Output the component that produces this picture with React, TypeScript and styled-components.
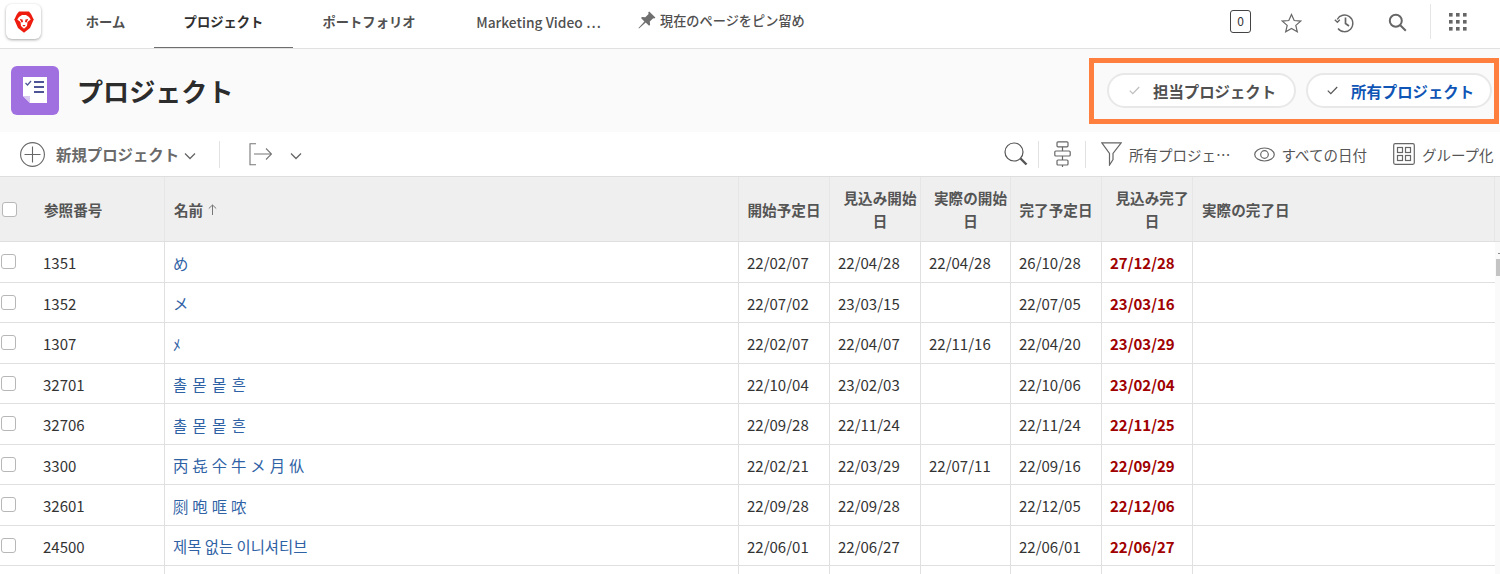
import React from "react";
import styled, { createGlobalStyle } from "styled-components";

const Global = createGlobalStyle`
  html, body { margin: 0; padding: 0; background: #fff; }
  body { font-family: "Noto Sans CJK JP", "Noto Sans", sans-serif; color: #333; }
`;

const Page = styled.div`
  width: 1500px;
  height: 574px;
  overflow: hidden;
  display: flex;
  flex-direction: column;
`;

const NavBar = styled.header`
  height: 48px;
  flex: none;
  display: flex;
  align-items: stretch;
  border-bottom: 1px solid #e1e1e1;
  padding-left: 6px;
  box-sizing: content-box;
`;

const LogoTile = styled.div`
  width: 35px;
  height: 35px;
  margin-top: 4px;
  border-radius: 6px;
  background: #fff;
  box-shadow: 0 1px 3px rgba(0, 0, 0, 0.35);
  display: flex;
  align-items: center;
  justify-content: center;
  margin-right: 16px;
`;

const NavTab = styled.div<{ $w: number; $active?: boolean; $latin?: boolean }>`
  width: ${(p) => p.$w}px;
  height: 48px;
  box-sizing: border-box;
  padding-top: 12px;
  line-height: 20px;
  text-align: center;
  font-size: ${(p) => (p.$latin ? 13.8 : 13.3)}px;
  font-weight: ${(p) => (p.$latin ? 500 : 700)};
  color: ${(p) => (p.$active ? "#2f2f2f" : "#505050")};
  border-bottom: ${(p) => (p.$active ? "1px solid #6e6e6e" : "1px solid transparent")};
  white-space: nowrap;
`;

const PinButton = styled.div`
  display: flex;
  align-items: flex-start;
  gap: 4px;
  margin-left: 6px;
  padding-top: 11px;
  font-size: 13.2px;
  line-height: 20px;
  font-weight: 500;
  color: #505050;
  white-space: nowrap;
`;

const NavRight = styled.div`
  margin-left: auto;
  display: flex;
  align-items: flex-start;
  padding-right: 33px;
`;

const CountBox = styled.div`
  width: 19px;
  height: 21px;
  margin-top: 10px;
  margin-right: 30px;
  border: 1px solid #444;
  border-radius: 3px;
  font-size: 12px;
  line-height: 20px;
  text-align: center;
  color: #333;
  box-sizing: content-box;
`;

const NavIcon = styled.div<{ $mr: number }>`
  margin-top: 13px;
  margin-right: ${(p) => p.$mr}px;
  display: flex;
`;

const NavDivider = styled.div`
  width: 1px;
  height: 35px;
  margin-top: 4px;
  margin-right: 18px;
  background: #e6e6e6;
`;

const TitleBand = styled.section`
  height: 83px;
  flex: none;
  background: #fafafa;
  display: flex;
  align-items: flex-start;
  padding-left: 11px;
`;

const TitleIcon = styled.div`
  width: 48px;
  height: 49px;
  margin-top: 17px;
  border-radius: 6px;
  background: #a06fe0;
  display: flex;
  align-items: center;
  justify-content: center;
`;

const Title = styled.h1`
  margin: 22px 0 0 18px;
  font-size: 26.1px;
  line-height: 40px;
  font-weight: 700;
  color: #2c2c2c;
`;

const FilterFrame = styled.div`
  margin-left: auto;
  margin-top: 9px;
  margin-right: 1px;
  width: 410px;
  height: 66px;
  box-sizing: border-box;
  border: 5px solid #ff7f3f;
  display: flex;
  align-items: flex-start;
  gap: 10px;
  padding: 10px 0 0 13px;
`;

const Pill = styled.div<{ $w: number; $on?: boolean }>`
  width: ${(p) => p.$w}px;
  height: 35px;
  box-sizing: border-box;
  border: 2px solid #e8e8e8;
  border-radius: 18px;
  background: #fff;
  display: flex;
  align-items: center;
  padding-left: ${(p) => (p.$on ? 19 : 20)}px;
  gap: 13px;
  font-size: 15.4px;
  font-weight: 700;
  color: ${(p) => (p.$on ? "#0f55b5" : "#505050")};
  white-space: nowrap;
`;

const Toolbar = styled.div`
  height: 44px;
  flex: none;
  display: flex;
  align-items: center;
  border-bottom: 1px solid #dedede;
  padding-left: 20px;
  box-sizing: content-box;
  white-space: nowrap;
  overflow: hidden;
`;

const NewLabel = styled.span`
  margin-left: 11px;
  margin-right: 5px;
  margin-top: -1px;
  font-size: 15.4px;
  font-weight: 700;
  color: #6a6a6a;
`;

const ToolDivider = styled.div<{ $ml: number; $mr: number }>`
  width: 1px;
  height: 27px;
  margin-left: ${(p) => p.$ml}px;
  margin-right: ${(p) => p.$mr}px;
  background: #e2e2e2;
`;

const ToolRight = styled.div`
  margin-left: auto;
  display: flex;
  align-items: center;
  width: 496px;
  flex: none;
`;

const ToolLabel = styled.span<{ $ml: number }>`
  margin-left: ${(p) => p.$ml}px;
  font-size: 14.5px;
  color: #555;
`;

const ToolIcon = styled.span<{ $ml?: number; $mt?: number }>`
  display: flex;
  margin-left: ${(p) => p.$ml ?? 0}px;
  margin-top: ${(p) => p.$mt ?? 0}px;
`;

const COLUMNS = "165px 574px 91px 91px 90px 91px 91px 302px";

const HeaderRow = styled.div`
  height: 65px;
  flex: none;
  display: grid;
  grid-template-columns: ${COLUMNS} 5px;
  background: #efefef;
  border-bottom: 1px solid #dfdfdf;
  box-sizing: border-box;
`;

const HeadCell = styled.div<{ $left?: boolean; $wrapped?: boolean }>`
  display: flex;
  align-items: center;
  justify-content: ${(p) => (p.$left ? "flex-start" : "center")};
  text-align: ${(p) => (p.$left ? "left" : "center")};
  padding: ${(p) => (p.$left ? "0 0 0 9px" : p.$wrapped ? "0 0 0 10px" : "0 5px")};
  box-sizing: border-box;
  border-right: 1px solid #e6e6e6;
  font-size: 14.6px;
  line-height: 23px;
  font-weight: 700;
  color: #555;
  &:last-child { border-right: 0; }
`;

const SortArrow = styled.span`
  margin-left: 5px;
  display: flex;
`;

const RefHead = styled(HeadCell)`
  justify-content: flex-start;
  padding: 0 0 0 2px;
  gap: 27px;
`;

const Check = styled.span`
  width: 15px;
  height: 15px;
  flex: none;
  box-sizing: border-box;
  border: 1px solid #b7b7b7;
  border-radius: 3px;
  background: #fff;
`;

const BodyWrap = styled.div`
  flex: 1;
  display: flex;
  min-height: 0;
`;

const Rows = styled.div`
  width: 1495px;
  flex: none;
`;

const Row = styled.div`
  height: 40.5px;
  display: grid;
  grid-template-columns: ${COLUMNS};
  box-sizing: border-box;
  border-bottom: 1px solid #e0e0e0;
`;

const Cell = styled.div`
  display: flex;
  align-items: center;
  padding-left: 8px;
  padding-top: 1.5px;
  box-sizing: border-box;
  border-right: 1px solid #e0e0e0;
  font-size: 15px;
  color: #333;
  white-space: nowrap;
  &:last-child { border-right: 0; }
`;

const RefCell = styled(Cell)`
  padding-left: 1px;
  gap: 27px;
  & > span:first-child { margin-top: -2px; }
`;

const NameCell = styled(Cell)<{ $wordGap: number }>`
  color: #2f62a5;
  font-size: 15.4px;
  word-spacing: ${(p) => p.$wordGap}px;
`;

const LateCell = styled(Cell)`
  color: #a00000;
  font-weight: 700;
`;

const ScrollTrack = styled.div`
  width: 5px;
  flex: none;
  background: #fafafa;
  position: relative;
`;

const ScrollArrow = styled.div`
  position: absolute;
  left: 3px;
  top: 11px;
  width: 2px;
  height: 1px;
  background: #8a8a8a;
`;

const ScrollThumb = styled.div`
  position: absolute;
  left: 1px;
  right: 0;
  top: 17px;
  height: 17px;
  background: #c4c4c4;
`;

const Chevron = () => (
  <svg width="12" height="8" viewBox="0 0 12 8" fill="none" stroke="#666" strokeWidth="1.3">
    <path d="M1 1.500l5 5 5-5" />
  </svg>
);

const Tick = ({ color }: { color: string }) => (
  <svg width="11" height="9" viewBox="0 0 11 9" fill="none" stroke={color} strokeWidth="1.2">
    <path d="M.8 4.600l3 3L10.200 1" />
  </svg>
);

const BraveLogo = () => (
  <svg width="20" height="22" viewBox="0 0 20 22">
    <path fill="#ee1c0e" d="M5 .5h10l2 2.500 2.700 5.500L16 17l-6 4.800L4 17 .3 8.500 3 3z" />
    <path fill="#fff" d="M5 6l3-2h4l3 2 1.700 2.500L13.500 11l-.5 4-3 2.800L7 15l-.5-4-3.200-2.500z" />
    <path fill="#ee1c0e" d="M5.800 8l2.700.6L9 11l-1.500.4zM14.200 8l-2.700.6L11 11l1.500.4zM8.300 14h3.400L10 15.800z" />
  </svg>
);

const PinIcon = () => (
  <svg width="18" height="18" viewBox="0 0 18 18" fill="#6f6f6f">
    <path d="M11.200.6l6.200 6-1 1-1.200-.3-3.400 3.300.3 3.200-1 1-3.400-3.400L1 17.500l-.5-.5 5.900-6.600-3.400-3.400 1-1 3.300.3 3.300-3.400-.4-1.300z" />
  </svg>
);

const StarIcon = () => (
  <svg width="21" height="21" viewBox="0 0 21 21" fill="none" stroke="#666" strokeWidth="1.2">
    <path d="M10.500 1.500l2.700 6 6.500.6-4.900 4.300 1.500 6.400-5.800-3.400-5.800 3.400 1.500-6.400L1.300 8.100l6.500-.6z" />
  </svg>
);

const HistoryIcon = () => (
  <svg width="21" height="20" viewBox="0 0 21 20" fill="none" stroke="#666" strokeWidth="1.4">
    <path d="M3.200 6.500A8.300 8.300 0 1 1 4 15.500" />
    <path d="M.8 6.800l2.600 2.400 2.400-2.500" />
    <path strokeWidth="1.700" d="M11.500 4.500v6l3.500 2.500" />
  </svg>
);

const SearchBold = () => (
  <svg width="19" height="19" viewBox="0 0 19 19" fill="none" stroke="#666" strokeWidth="2">
    <circle cx="7.800" cy="7.800" r="6" />
    <path d="M12.300 12.300l5.500 5.500" />
  </svg>
);

const AppsIcon = () => (
  <svg width="18" height="18" viewBox="0 0 18 18" fill="#666">
    {[0, 7, 14].flatMap((y) =>
      [0, 7, 14].map((x) => <rect key={`${x}-${y}`} x={x} y={y} width="3.600" height="3.600" />),
    )}
  </svg>
);

const ProjectGlyph = () => (
  <svg width="25" height="27" viewBox="0 0 25 27">
    <path fill="#fff" d="M0 0h24v26H7l-7-7z" />
    <path fill="#d9c8f0" d="M0 19h7v7z" />
    <path fill="none" stroke="#4d5596" strokeWidth="1.200" d="M2.500 6l2 2 3.500-4" />
    <path fill="none" stroke="#4d5596" strokeWidth="2" d="M11 5h10M11 10h10M11 15h10" />
  </svg>
);

const PlusCircle = () => (
  <svg width="25" height="25" viewBox="0 0 25 25" fill="none" stroke="#666" strokeWidth="1.100">
    <circle cx="12.500" cy="12.500" r="11.900" />
    <path d="M12.500 4.500v16M4.500 12.500h16" />
  </svg>
);

const ExportIcon = () => (
  <svg width="23" height="23" viewBox="0 0 23 23" fill="none" stroke="#777" strokeWidth="1.100">
    <path d="M7 .8H1v21h6" />
    <path d="M5 11h17.500M17 5.500l5.500 5.500-5.500 5.500" />
  </svg>
);

const SearchThin = () => (
  <svg width="24" height="24" viewBox="0 0 24 24" fill="none" stroke="#555" strokeWidth="1.200">
    <circle cx="10" cy="10" r="9" />
    <path strokeWidth="2.400" d="M16.500 16.500l6 6" />
  </svg>
);

const HierarchyIcon = () => (
  <svg width="17" height="26" viewBox="0 0 17 26" fill="none" stroke="#666" strokeWidth="1.200">
    <rect x="3" y=".8" width="11" height="5" rx="1" />
    <rect x=".8" y="10" width="15.400" height="5" rx="1" />
    <rect x="3" y="19" width="11" height="5" rx="1" />
    <path d="M8.500 5.800V10M8.500 15v4M8.500 24v2" />
  </svg>
);

const FilterIcon = () => (
  <svg width="21" height="24" viewBox="0 0 21 24" fill="none" stroke="#666" strokeWidth="1.200">
    <path d="M.8.800h19.400L12 11.500v6l-3.500 5.500v-11.500z" />
  </svg>
);

const EyeIcon = () => (
  <svg width="21" height="15" viewBox="0 0 21 15" fill="none" stroke="#666" strokeWidth="1.200">
    <ellipse cx="10.500" cy="7.500" rx="9.800" ry="6.500" />
    <circle cx="10.500" cy="7.500" r="3.800" />
  </svg>
);

const GroupIcon = () => (
  <svg width="22" height="22" viewBox="0 0 22 22" fill="none" stroke="#666" strokeWidth="1.200">
    <rect x=".7" y=".7" width="20.600" height="20.600" rx="1.500" />
    <rect x="4.500" y="4.500" width="5" height="5" />
    <rect x="12.500" y="4.500" width="5" height="5" />
    <rect x="4.500" y="12.500" width="5" height="5" />
    <rect x="12.500" y="12.500" width="5" height="5" />
  </svg>
);

const UpArrow = () => (
  <svg width="9" height="11" viewBox="0 0 9 11" fill="none" stroke="#777" strokeWidth="1">
    <path d="M4.500 11V1M.8 4.500L4.500 1l3.700 3.500" />
  </svg>
);

type Project = {
  ref: string;
  name: string;
  wordGap: number;
  planStart: string;
  projStart: string;
  actStart: string;
  planEnd: string;
  projEnd: string;
};

const PROJECTS: Project[] = [
  { ref: "1351", name: "め", wordGap: 0, planStart: "22/02/07", projStart: "22/04/28", actStart: "22/04/28", planEnd: "26/10/28", projEnd: "27/12/28" },
  { ref: "1352", name: "メ", wordGap: 0, planStart: "22/07/02", projStart: "23/03/15", actStart: "", planEnd: "22/07/05", projEnd: "23/03/16" },
  { ref: "1307", name: "ﾒ", wordGap: 0, planStart: "22/02/07", projStart: "22/04/07", actStart: "22/11/16", planEnd: "22/04/20", projEnd: "23/03/29" },
  { ref: "32701", name: "촐 몯 뫁 흔", wordGap: 2, planStart: "22/10/04", projStart: "23/02/03", actStart: "", planEnd: "22/10/06", projEnd: "23/02/04" },
  { ref: "32706", name: "촐 몯 뫁 흔", wordGap: 2, planStart: "22/09/28", projStart: "22/11/24", actStart: "", planEnd: "22/11/24", projEnd: "22/11/25" },
  { ref: "3300", name: "丙 㐂 仐 牛 メ 月 㐺", wordGap: 0.5, planStart: "22/02/21", projStart: "22/03/29", actStart: "22/07/11", planEnd: "22/09/16", projEnd: "22/09/29" },
  { ref: "32601", name: "㓹 咆 哐 哝", wordGap: 0.5, planStart: "22/09/28", projStart: "22/09/28", actStart: "", planEnd: "22/12/05", projEnd: "22/12/06" },
  { ref: "24500", name: "제목 없는 이니셔티브", wordGap: 0, planStart: "22/06/01", projStart: "22/06/27", actStart: "", planEnd: "22/06/01", projEnd: "22/06/27" },
];

export default function App() {
  return (
    <Page>
      <Global />
      <NavBar>
        <LogoTile>
          <BraveLogo />
        </LogoTile>
        <NavTab $w={97}>ホーム</NavTab>
        <NavTab $w={139} $active>プロジェクト</NavTab>
        <NavTab $w={152}>ポートフォリオ</NavTab>
        <NavTab $w={187} $latin>Marketing Video ⋯</NavTab>
        <PinButton>
          <PinIcon />
          現在のページをピン留め
        </PinButton>
        <NavRight>
          <CountBox>0</CountBox>
          <NavIcon $mr={32}><StarIcon /></NavIcon>
          <NavIcon $mr={33}><HistoryIcon /></NavIcon>
          <NavIcon $mr={23}><SearchBold /></NavIcon>
          <NavDivider />
          <NavIcon $mr={0}><AppsIcon /></NavIcon>
        </NavRight>
      </NavBar>

      <TitleBand>
        <TitleIcon>
          <ProjectGlyph />
        </TitleIcon>
        <Title>プロジェクト</Title>
        <FilterFrame>
          <Pill $w={189}>
            <Tick color="#bdbdbd" />
            担当プロジェクト
          </Pill>
          <Pill $w={186} $on>
            <Tick color="#555" />
            所有プロジェクト
          </Pill>
        </FilterFrame>
      </TitleBand>

      <Toolbar>
        <PlusCircle />
        <NewLabel>新規プロジェクト</NewLabel>
        <ToolIcon $mt={3}><Chevron /></ToolIcon>
        <ToolDivider $ml={23} $mr={29} />
        <ExportIcon />
        <ToolIcon $ml={18} $mt={3}><Chevron /></ToolIcon>
        <ToolRight>
          <SearchThin />
          <ToolDivider $ml={10} $mr={15} />
          <HierarchyIcon />
          <ToolDivider $ml={14} $mr={15} />
          <FilterIcon />
          <ToolLabel $ml={7}>所有プロジェ…</ToolLabel>
          <ToolIcon $ml={23}><EyeIcon /></ToolIcon>
          <ToolLabel $ml={7}>すべての日付</ToolLabel>
          <ToolIcon $ml={26}><GroupIcon /></ToolIcon>
          <ToolLabel $ml={7}>グループ化</ToolLabel>
        </ToolRight>
      </Toolbar>

      <HeaderRow>
        <RefHead>
          <Check />
          参照番号
        </RefHead>
        <HeadCell $left>
          名前
          <SortArrow><UpArrow /></SortArrow>
        </HeadCell>
        <HeadCell>開始予定日</HeadCell>
        <HeadCell $wrapped>見込み開始日</HeadCell>
        <HeadCell $wrapped>実際の開始日</HeadCell>
        <HeadCell>完了予定日</HeadCell>
        <HeadCell $wrapped>見込み完了日</HeadCell>
        <HeadCell $left>実際の完了日</HeadCell>
        <HeadCell />
      </HeaderRow>

      <BodyWrap>
        <Rows>
          {PROJECTS.map((p) => (
            <Row key={p.ref}>
              <RefCell>
                <Check />
                {p.ref}
              </RefCell>
              <NameCell $wordGap={p.wordGap}>{p.name}</NameCell>
              <Cell>{p.planStart}</Cell>
              <Cell>{p.projStart}</Cell>
              <Cell>{p.actStart}</Cell>
              <Cell>{p.planEnd}</Cell>
              <LateCell>{p.projEnd}</LateCell>
              <Cell />
            </Row>
          ))}
          <Row>
            <RefCell />
            <Cell />
            <Cell />
            <Cell />
            <Cell />
            <Cell />
            <Cell />
            <Cell />
          </Row>
        </Rows>
        <ScrollTrack>
          <ScrollArrow />
          <ScrollThumb />
        </ScrollTrack>
      </BodyWrap>
    </Page>
  );
}
